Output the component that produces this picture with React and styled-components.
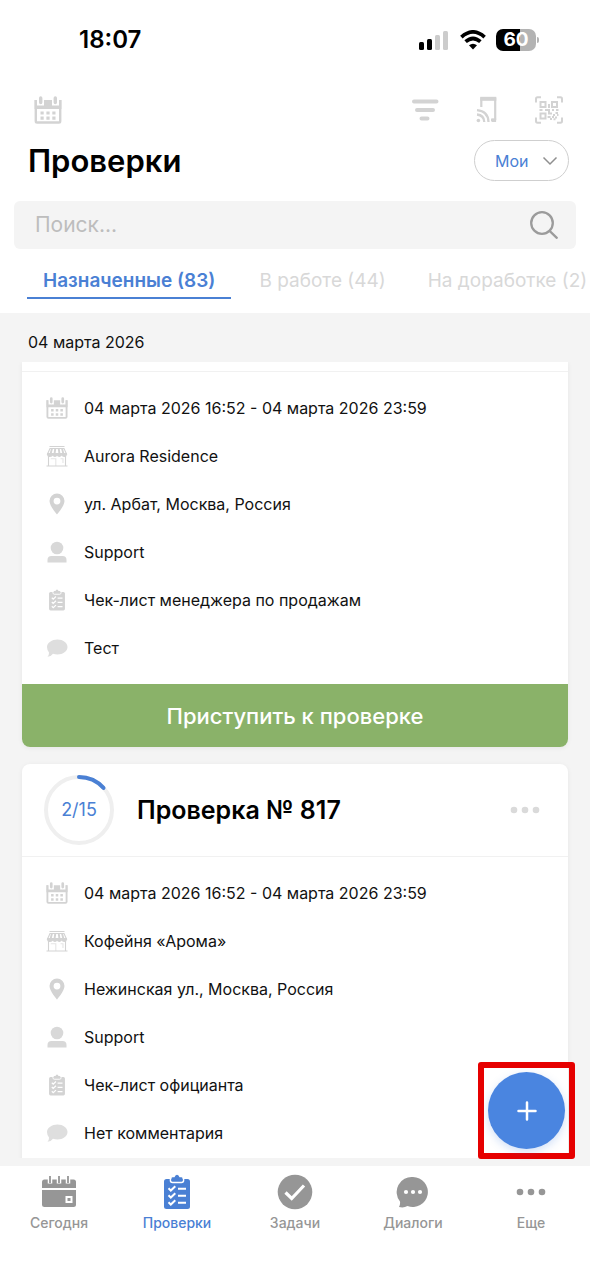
import React from 'react';
import styled, { createGlobalStyle, css } from 'styled-components';

const GlobalStyle = createGlobalStyle`
  * { box-sizing: border-box; }
  body { margin: 0; background: #fff; color: #111; font-family: Inter, "Liberation Sans", sans-serif; }
  button, input, select { font: inherit; color: inherit; }
  h1, h2, ul { margin: 0; padding: 0; }
  svg { display: block; flex: none; }
`;

const Screen = styled.div`
  height: 100vh;
  display: flex;
  flex-direction: column;
  overflow: hidden;
  background: #fff;
`;

const StatusBar = styled.div`
  display: flex;
  align-items: center;
  justify-content: space-between;
  height: 80px;
  padding: 0 54px 0 79px;
  flex: none;
`;

const Clock = styled.time`
  font-size: 24px;
  line-height: 28px;
  font-weight: 600;
  color: #000;
`;

const StatusIcons = styled.div`
  display: flex;
  align-items: center;
  gap: 10px;
`;

const Battery = styled.div`
  position: relative;
  width: 40px;
  height: 22px;
  border-radius: 7px;
  background: linear-gradient(to right, #000 60%, #b3b3b3 60%);
  color: #fff;
  font-size: 19px;
  line-height: 22px;
  font-weight: 700;
  text-align: center;
  &::after {
    content: '';
    position: absolute;
    left: 41px;
    top: 8px;
    width: 2px;
    height: 6px;
    border-radius: 0 2px 2px 0;
    background: #b3b3b3;
  }
`;

const PlainButton = styled.button`
  display: flex;
  align-items: center;
  justify-content: center;
  padding: 0;
  border: 0;
  background: none;
  color: #dadada;
  cursor: pointer;
`;

const Toolbar = styled.div`
  display: flex;
  align-items: center;
  justify-content: space-between;
  height: 60px;
  padding: 0 27px 0 34px;
  flex: none;
`;

const ToolGroup = styled.div`
  display: flex;
  gap: 34px;
`;

const TitleRow = styled.div`
  display: flex;
  align-items: center;
  justify-content: space-between;
  height: 41px;
  padding: 0 21px 0 28px;
  flex: none;
`;

const Title = styled.h1`
  font-size: 31px;
  line-height: 40px;
  font-weight: 600;
  color: #000;
`;

const SelectWrap = styled.label`
  position: relative;
  svg {
    position: absolute;
    right: 11px;
    top: 16px;
    pointer-events: none;
  }
`;

const FilterSelect = styled.select`
  appearance: none;
  display: block;
  width: 95px;
  height: 41px;
  padding: 0 30px 0 20px;
  border: 1px solid #cfcfcf;
  border-radius: 21px;
  background: #fff;
  color: #4a80d4;
  font-size: 16px;
`;

const SearchBox = styled.label`
  display: flex;
  align-items: center;
  height: 48px;
  margin: 20px 14px 0;
  padding: 0 17px 0 21px;
  border-radius: 6px;
  background: #f4f4f4;
  flex: none;
`;

const SearchInput = styled.input`
  flex: 1;
  min-width: 0;
  padding: 0;
  border: 0;
  outline: 0;
  background: none;
  font-size: 21px;
  line-height: 28px;
  &::placeholder { color: #bdbdbd; opacity: 1; }
`;

const Tabs = styled.div`
  display: flex;
  height: 64px;
  padding: 16px 0 14px 27px;
  overflow: hidden;
  flex: none;
`;

const Tab = styled.button`
  flex: none;
  padding: 0 14px;
  border: 0;
  border-bottom: 2px solid transparent;
  background: none;
  color: #d8d8d8;
  font-size: 19px;
  line-height: 24px;
  white-space: nowrap;
  & + & { margin-left: 14px; }
  ${(p) => p.$active && css`
    padding: 0 16px;
    border-color: #4a80d4;
    color: #4a80d4;
    font-weight: 600;
  `}
`;

const Content = styled.main`
  position: relative;
  flex: 1;
  min-height: 0;
  display: flex;
  flex-direction: column;
  padding-bottom: 8px;
  background: #f4f4f4;
`;

const DateHeading = styled.h2`
  height: 49px;
  padding: 5px 28px 0;
  font-size: 16px;
  line-height: 48px;
  font-weight: 400;
  flex: none;
`;

const List = styled.div`
  flex: 1;
  min-height: 0;
  display: flex;
  flex-direction: column;
  gap: 17px;
  padding: 0 22px;
  overflow: hidden;
`;

const Card = styled.article`
  flex: none;
  border-radius: ${(p) => (p.$cut ? '0 0 8px 8px' : '8px')};
  background: #fff;
  box-shadow: 0 1px 5px rgba(0, 0, 0, 0.06);
  overflow: hidden;
`;

const CardHeader = styled.header`
  display: flex;
  align-items: center;
  height: ${(p) => (p.$cut ? '10px' : '93px')};
  padding: 0 28px 0 21px;
  border-bottom: 1px solid #f1f1f1;
`;

const Progress = styled.div`
  position: relative;
  display: flex;
  align-items: center;
  justify-content: center;
  color: #4a80d4;
  font-size: 18px;
  line-height: 24px;
  svg { position: absolute; inset: 0; }
  width: 72px;
  height: 72px;
`;

const CardTitle = styled.h2`
  flex: 1;
  padding-left: 22px;
  font-size: 25px;
  line-height: 32px;
  font-weight: 600;
  color: #000;
`;

const Details = styled.ul`
  list-style: none;
  padding: 12px 22px;
`;

const Detail = styled.li`
  display: flex;
  align-items: center;
  gap: 16px;
  height: 48px;
  padding-left: 2px;
  font-size: 16px;
  line-height: 24px;
  white-space: nowrap;
  color: #111;
`;

const StartButton = styled.button`
  display: block;
  width: 100%;
  height: 63px;
  border: 0;
  background: #8ab269;
  color: #fff;
  font-size: 22px;
  line-height: 28px;
  font-weight: 500;
`;

const Highlight = styled.div`
  position: absolute;
  right: 15px;
  bottom: 7px;
  padding: 4px;
  border: 6px solid #e60000;
  border-radius: 3px;
`;

const AddButton = styled.button`
  display: flex;
  align-items: center;
  justify-content: center;
  width: 77px;
  height: 77px;
  padding: 0;
  border: 0;
  border-radius: 50%;
  background: #4a85e0;
  color: #fff;
  box-shadow: 0 3px 8px rgba(74, 133, 224, 0.25);
`;

const BottomNav = styled.nav`
  display: flex;
  align-items: flex-start;
  height: 114px;
  flex: none;
  background: #fff;
`;

const NavItem = styled.a`
  flex: 1;
  display: flex;
  flex-direction: column;
  align-items: center;
  gap: 4px;
  padding-top: 8px;
  color: ${(p) => (p.$active ? '#4a80d4' : '#969696')};
  font-size: 14px;
  line-height: 18px;
  font-weight: 500;
  text-decoration: none;
`;

const Signal = () => (
  <svg width="31" height="20" viewBox="0 0 31 20">
    <rect x="0" y="12" width="5" height="8" rx="1.5" />
    <rect x="8" y="9" width="5" height="11" rx="1.5" />
    <rect x="16" y="5" width="5" height="15" rx="1.5" fill="#ccc" />
    <rect x="24" y="1" width="5" height="19" rx="1.5" fill="#ccc" />
  </svg>
);

const Wifi = () => (
  <svg width="26" height="20" viewBox="0 0 26 20" fill="none" stroke="#000" strokeWidth="3.7">
    <path d="M1.4 7.1Q13-3.3 24.6 7.1" />
    <path d="M5.6 11.7Q13 5.2 20.4 11.7" />
    <path d="M9 15.3Q13 12.2 17 15.3L13 19.4Z" fill="#000" stroke="none" />
  </svg>
);

const CalendarIcon = ({ size = 22 }) => (
  <svg width={size} height={size} viewBox="0 0 28 28" fill="none" stroke="#d3d3d3">
    <path d="M1.8 4v21.2q0 1.3 1.3 1.3h21.8q1.3 0 1.3-1.3V4" strokeWidth="2.4" />
    <path d="M.6 4h2.400v5.500h7V4h8v5.500h7V4h2.400v9H.6Z" fill="#d3d3d3" stroke="none" />
    <path d="M6.700 2v4.500M21.300 2v4.500" strokeWidth="3.400" strokeLinecap="round" />
    <path d="M6.500 17h3.200M12.400 17h3.200M18.300 17h3.200M6.500 22.200h3.200M12.400 22.200h3.200M18.300 22.200h3.200" strokeWidth="3.200" />
  </svg>
);

const FilterIcon = () => (
  <svg width="28" height="28" viewBox="0 0 28 28" stroke="#d3d3d3" strokeWidth="4" strokeLinecap="round">
    <path d="M3 5.500h22.500M6 14h16M10.500 22.500h6" />
  </svg>
);

const NfcIcon = () => (
  <svg width="28" height="28" viewBox="0 0 28 28" fill="none" stroke="#d3d3d3">
    <path d="M8.3 11V2.2h13.900v21.600H18" strokeWidth="2.200" strokeLinejoin="round" />
    <path d="M7.300 2.800h16" strokeWidth="4" />
    <path d="M18.500 24.200h4.600" strokeWidth="3.600" />
    <path d="M4 14.200q11 .8 11.500 11.800M4 18.500q7 .7 7.300 7.500" strokeWidth="2.300" />
    <circle cx="5.400" cy="24.500" r="1.800" fill="#d3d3d3" stroke="none" />
  </svg>
);

const QrIcon = () => (
  <svg width="28" height="28" viewBox="0 0 28 28" fill="none" stroke="#d3d3d3" strokeWidth="2">
    <path d="M6 1.2H2.5Q1 1.2 1 3v3.5M22 1.2h3.5Q27 1.2 27 3v3.5M6 26.8H2.5Q1 26.8 1 25v-3.5M22 26.8h3.5Q27 26.8 27 25v-3.5" />
    <path d="M5.500 6h5v5h-5ZM17 6h5v5h-5ZM5.500 17.500h5v5h-5Z" />
    <path d="M14 8v4M4.500 14h3M10 14h5M17 14h2M21 14h2.500M13 17.500h4M14 15v3M12.600 21h3M15 23h2M18 19h2M20.500 17h2.500M22 19h1.500M17 21h2M20 21.500h2M18.500 23.200h2" />
  </svg>
);

const SearchIcon = () => (
  <svg width="30" height="30" viewBox="0 0 30 30" fill="none" stroke="#9b9b9b" strokeWidth="2.3" strokeLinecap="round">
    <circle cx="13" cy="13" r="10.8" />
    <path d="M20.8 21.2l7 6.6" />
  </svg>
);

const ShopIcon = () => (
  <svg width="22" height="22" viewBox="0 0 22 22" fill="none" stroke="#d3d3d3" strokeWidth="1.1">
    <path d="M3.500 1.500h15M4 3.500h14L20.500 9H1.500Z" />
    <path d="M6 3.500L4.500 9M9.300 3.500L8.500 9M12.700 3.500l.8 5.500M16 3.500L17.500 9" strokeWidth="1.900" />
    <path d="M1.500 8.500q0 3 2.300 3T6.600 9.500q.4 2 2.300 2T11 9.500q.4 2 2.300 2t2.300-2q.4 2 2.600 2t2.300-3Z" fill="#d3d3d3" />
    <path d="M2.500 11v10M19.500 11v10M.5 21h21" />
    <path d="M4.800 13.800h5V21M14.500 13.800h2.500V18" strokeOpacity=".6" />
  </svg>
);

const PinIcon = () => (
  <svg width="22" height="22" viewBox="0 0 22 22" fill="#d3d3d3" fillRule="evenodd">
    <path d="M11 .5a7.5 7.5 0 0 0-7.5 7.5c0 5 7.5 13.5 7.5 13.5S18.500 13 18.500 8A7.500 7.500 0 0 0 11 .5Zm0 4.200a3.400 3.400 0 1 1 0 6.800 3.400 3.400 0 0 1 0-6.800Z" />
  </svg>
);

const UserIcon = () => (
  <svg width="22" height="22" viewBox="0 0 22 22" fill="#d8d8d8">
    <circle cx="11" cy="7" r="6.300" />
    <path d="M1.500 21.500V19q0-4 4-4h11q4 0 4 4v2.500Z" />
  </svg>
);

const CommentIcon = () => (
  <svg width="22" height="22" viewBox="0 0 22 22" fill="#dedede">
    <path d="M11.500 2.500C17 2.500 21.500 5.700 21.500 10s-4.500 7.500-10 7.500q-2.500 0-4.500-.8Q5 19.500 1.500 19.800 3.200 18 3 15.500 1 13.200 1 10c0-4.300 5-7.500 10.500-7.500Z" />
  </svg>
);

const ChecklistIcon = ({ width = 22, height = 22, color = '#d3d3d3' }) => (
  <svg width={width} height={height} viewBox="0 0 28 36" fill="none">
    <rect x="1" y="5" width="26" height="30" rx="2.500" fill={color} />
    <path d="M7.500 3v3.500q0 2 2 2h9q2 0 2-2V3" stroke="#fff" strokeWidth="1.600" />
    <path d="M8.500 7V4.500q0-1.200 1.200-1.200h1.800Q12.200.8 14 .8t2.500 2.500h1.800q1.200 0 1.200 1.200V7Z" fill={color} />
    <path d="M5.500 14.300l2.300 2.200 4.500-4.200M5.500 21.300l2.300 2.200 4.500-4.200M5.500 28.300l2.300 2.200 4.500-4.200M15 14.800h8M15 21.800h8M15 28.800h8" stroke="#fff" strokeWidth="2" />
  </svg>
);

const MoreIcon = ({ height = 28 }) => (
  <svg width="30" height={height} viewBox="0 0 30 28" fill="currentColor">
    <circle cx="4" cy="14" r="3.300" />
    <circle cx="15" cy="14" r="3.300" />
    <circle cx="26" cy="14" r="3.300" />
  </svg>
);

const TodayIcon = () => (
  <svg width="36" height="36" viewBox="0 0 36 36" fill="none">
    <path d="M1 14V8q0-2.500 2.500-2.500h29Q35 5.500 35 8v6Z" fill="#969696" />
    <path d="M1 16h34v14.500q0 2.500-2.500 2.500h-29Q1 33 1 30.500Z" fill="#969696" />
    <path d="M9 2v7.500M18 2v7.500M27 2v7.500" stroke="#fff" strokeWidth="4.500" />
    <path d="M9 2v7M18 2v7M27 2v7" stroke="#969696" strokeWidth="1.800" />
    <rect x="25.500" y="23" width="5" height="5" stroke="#fff" strokeWidth="2" />
  </svg>
);

const TasksIcon = () => (
  <svg width="36" height="36" viewBox="0 0 36 36" fill="none">
    <circle cx="18" cy="18" r="17.300" fill="#969696" />
    <path d="M8.500 18.500l6.200 6L27 11.500" stroke="#fff" strokeWidth="3.200" />
  </svg>
);

const ChatIcon = () => (
  <svg width="36" height="36" viewBox="0 0 36 36" fill="#969696">
    <path d="M18 3a15 15 0 1 1-5.500 29q-4 2.200-8.500.9 1.400-2 1-5.500A15 15 0 0 1 18 3Z" />
    <circle cx="11" cy="18" r="2.100" fill="#fff" />
    <circle cx="18" cy="18" r="2.100" fill="#fff" />
    <circle cx="25" cy="18" r="2.100" fill="#fff" />
  </svg>
);

const detailIcons = [CalendarIcon, ShopIcon, PinIcon, UserIcon, ChecklistIcon, CommentIcon];

const DetailList = ({ values }) => (
  <Details>
    {values.map((value, i) => {
      const Icon = detailIcons[i];
      return (
        <Detail key={value}>
          <Icon />
          {value}
        </Detail>
      );
    })}
  </Details>
);

const tabs = ['Назначенные (83)', 'В работе (44)', 'На доработке (2)'];

const navItems = [
  { label: 'Сегодня', icon: <TodayIcon /> },
  { label: 'Проверки', icon: <ChecklistIcon width={28} height={36} color="#4a80d4" />, active: true },
  { label: 'Задачи', icon: <TasksIcon /> },
  { label: 'Диалоги', icon: <ChatIcon /> },
  { label: 'Еще', icon: <MoreIcon height={36} /> },
];

export default function App() {
  return (
    <Screen>
      <GlobalStyle />
      <StatusBar>
        <Clock>18:07</Clock>
        <StatusIcons>
          <Signal />
          <Wifi />
          <Battery>60</Battery>
        </StatusIcons>
      </StatusBar>
      <Toolbar>
        <PlainButton aria-label="Календарь"><CalendarIcon size={28} /></PlainButton>
        <ToolGroup>
          <PlainButton aria-label="Фильтр"><FilterIcon /></PlainButton>
          <PlainButton aria-label="NFC"><NfcIcon /></PlainButton>
          <PlainButton aria-label="QR-код"><QrIcon /></PlainButton>
        </ToolGroup>
      </Toolbar>
      <TitleRow>
        <Title>Проверки</Title>
        <SelectWrap>
          <FilterSelect aria-label="Чьи проверки" defaultValue="my">
            <option value="my">Мои</option>
          </FilterSelect>
          <svg width="16" height="10" viewBox="0 0 16 10" fill="none" stroke="#8f8f8f" strokeWidth="1.500">
            <path d="M1.500 1.500L8 8l6.500-6.500" />
          </svg>
        </SelectWrap>
      </TitleRow>
      <SearchBox>
        <SearchInput type="text" placeholder="Поиск..." aria-label="Поиск" />
        <SearchIcon />
      </SearchBox>
      <Tabs role="tablist">
        {tabs.map((tab, i) => (
          <Tab key={tab} role="tab" aria-selected={i === 0} $active={i === 0}>{tab}</Tab>
        ))}
      </Tabs>
      <Content>
        <DateHeading>04 марта 2026</DateHeading>
        <List>
          <Card $cut>
            <CardHeader $cut />
            <DetailList
              values={[
                '04 марта 2026 16:52 - 04 марта 2026 23:59',
                'Aurora Residence',
                'ул. Арбат, Москва, Россия',
                'Support',
                'Чек-лист менеджера по продажам',
                'Тест',
              ]}
            />
            <StartButton>Приступить к проверке</StartButton>
          </Card>
          <Card>
            <CardHeader>
              <Progress>
                <svg width="72" height="72" viewBox="0 0 72 72" fill="none" strokeWidth="4">
                  <circle cx="36" cy="36" r="33" stroke="#efefef" />
                  <path d="M36 3a33 33 0 0 1 24.500 10.900" stroke="#4a80d4" strokeLinecap="round" />
                </svg>
                2/15
              </Progress>
              <CardTitle>Проверка № 817</CardTitle>
              <PlainButton aria-label="Действия"><MoreIcon /></PlainButton>
            </CardHeader>
            <DetailList
              values={[
                '04 марта 2026 16:52 - 04 марта 2026 23:59',
                'Кофейня «Арома»',
                'Нежинская ул., Москва, Россия',
                'Support',
                'Чек-лист официанта',
                'Нет комментария',
              ]}
            />
          </Card>
        </List>
        <Highlight>
          <AddButton aria-label="Добавить">
            <svg width="20" height="20" viewBox="0 0 20 20" stroke="currentColor" strokeWidth="2.500" strokeLinecap="round">
              <path d="M10 1.500v17M1.500 10h17" />
            </svg>
          </AddButton>
        </Highlight>
      </Content>
      <BottomNav>
        {navItems.map(({ label, icon, active }) => (
          <NavItem key={label} href="#" $active={active}>
            {icon}
            {label}
          </NavItem>
        ))}
      </BottomNav>
    </Screen>
  );
}
